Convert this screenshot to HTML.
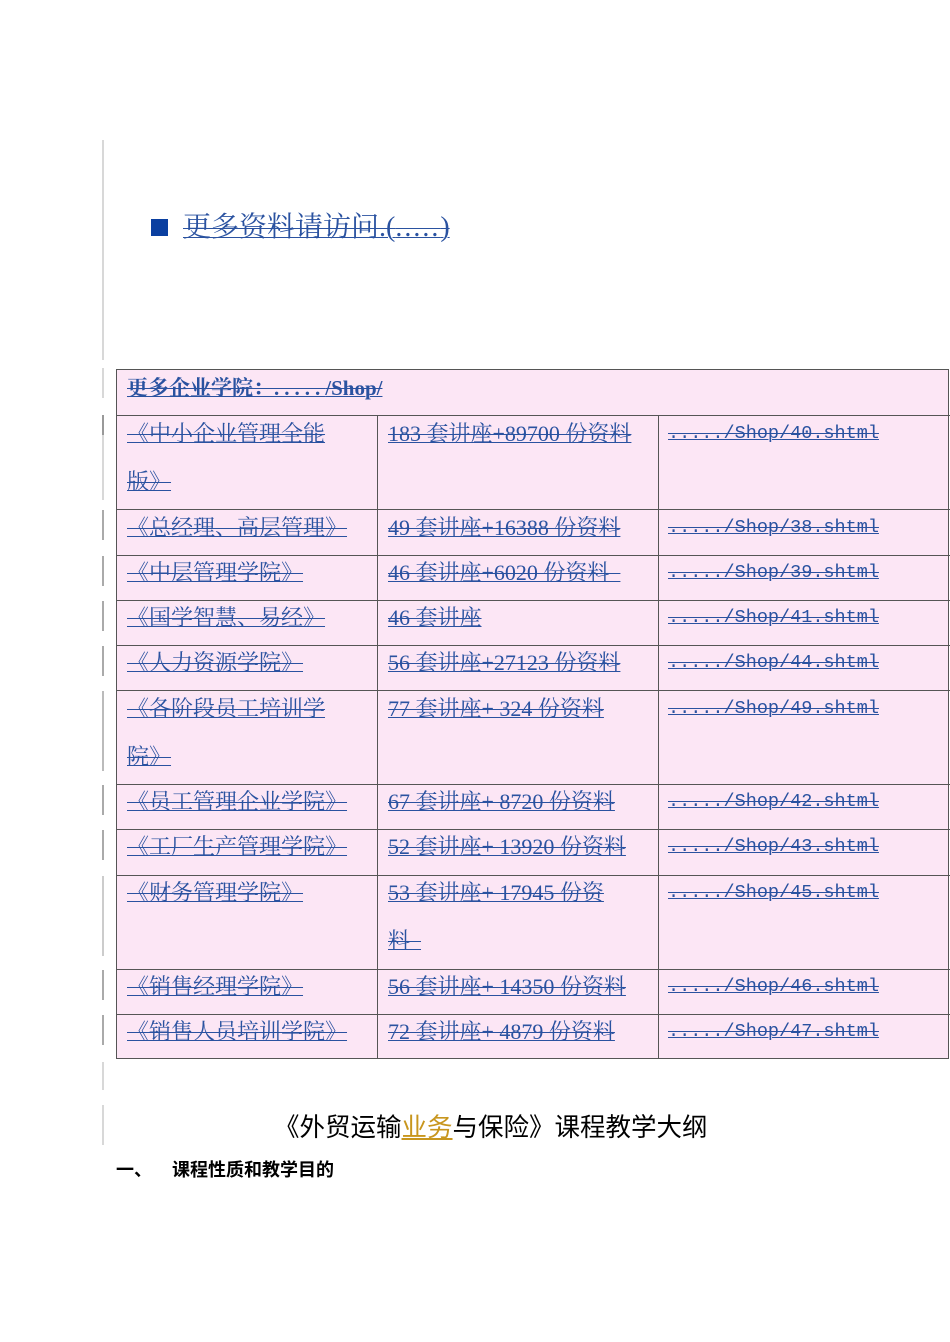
<!DOCTYPE html>
<html><head><meta charset="utf-8">
<style>
body{margin:0;width:950px;height:1342px;background:#fff;position:relative;overflow:hidden;font-family:"Liberation Serif","Noto Serif CJK SC",serif;}
.a{position:absolute;}
.lk{color:#2a52a0;text-decoration:underline line-through;text-decoration-thickness:1px;white-space:nowrap;}
.bar{position:absolute;left:102px;width:2px;background:#d8d8d8;}
.tb{position:absolute;left:116px;top:369px;width:833px;height:690px;background:#fce6f5;border:1px solid #555;box-sizing:border-box;}
.h{position:absolute;left:116px;width:834px;height:1px;background:#555;}
.v{position:absolute;width:1px;background:#555;}
.c{position:absolute;font-size:22px;line-height:48px;}
.m{font-family:"Liberation Mono",monospace;font-size:18.5px;}
</style></head><body>
<div class="bar" style="top:140px;height:220px"></div>
<div class="bar" style="top:368px;height:30px"></div>
<div class="bar" style="top:415px;height:20px;background:#999"></div>
<div class="bar" style="top:435px;height:65px"></div>
<div class="bar" style="top:510px;height:30px;background:#aaa"></div>
<div class="bar" style="top:556px;height:30px;background:#aaa"></div>
<div class="bar" style="top:601px;height:30px;background:#aaa"></div>
<div class="bar" style="top:646px;height:30px;background:#aaa"></div>
<div class="bar" style="top:691px;height:80px;background:#bbb"></div>
<div class="bar" style="top:785px;height:30px;background:#aaa"></div>
<div class="bar" style="top:830px;height:30px;background:#aaa"></div>
<div class="bar" style="top:876px;height:80px;background:#ccc"></div>
<div class="bar" style="top:970px;height:30px;background:#aaa"></div>
<div class="bar" style="top:1015px;height:30px;background:#aaa"></div>
<div class="bar" style="top:1062px;height:28px"></div>
<div class="bar" style="top:1105px;height:40px"></div>

<div class="a" style="left:151px;top:219px;width:17px;height:17px;background:#0a3fa0"></div>
<div class="a lk" style="left:183px;top:208px;font-size:28px;line-height:40px;">更多资料请访问.(<span style="letter-spacing:2px">.....</span>)</div>

<div class="tb"></div>
<div class="h" style="top:415px"></div>
<div class="h" style="top:509px"></div>
<div class="h" style="top:555px"></div>
<div class="h" style="top:600px"></div>
<div class="h" style="top:645px"></div>
<div class="h" style="top:690px"></div>
<div class="h" style="top:784px"></div>
<div class="h" style="top:829px"></div>
<div class="h" style="top:875px"></div>
<div class="h" style="top:969px"></div>
<div class="h" style="top:1014px"></div>
<div class="v" style="left:377px;top:415px;height:644px"></div>
<div class="v" style="left:658px;top:415px;height:644px"></div>

<div class="c lk" style="left:127px;top:364px;font-weight:bold;font-size:21px;">更多企业学院：<span style="letter-spacing:5px">.....</span>/Shop/</div>

<div class="c lk" style="left:127px;top:410px">《中小企业管理全能</div>
<div class="c lk" style="left:127px;top:458px">版》</div>
<div class="c lk" style="left:388px;top:410px">183 套讲座+89700 份资料</div>
<div class="c lk m" style="left:668px;top:410px">...../Shop/40.shtml</div>

<div class="c lk" style="left:127px;top:504px">《总经理、高层管理》</div>
<div class="c lk" style="left:388px;top:504px">49 套讲座+16388 份资料</div>
<div class="c lk m" style="left:668px;top:504px">...../Shop/38.shtml</div>

<div class="c lk" style="left:127px;top:549px">《中层管理学院》</div>
<div class="c lk" style="left:388px;top:549px">46 套讲座+6020 份资料 &nbsp;</div>
<div class="c lk m" style="left:668px;top:549px">...../Shop/39.shtml</div>

<div class="c lk" style="left:127px;top:594px">《国学智慧、易经》</div>
<div class="c lk" style="left:388px;top:594px">46 套讲座</div>
<div class="c lk m" style="left:668px;top:594px">...../Shop/41.shtml</div>

<div class="c lk" style="left:127px;top:639px">《人力资源学院》</div>
<div class="c lk" style="left:388px;top:639px">56 套讲座+27123 份资料</div>
<div class="c lk m" style="left:668px;top:639px">...../Shop/44.shtml</div>

<div class="c lk" style="left:127px;top:685px">《各阶段员工培训学</div>
<div class="c lk" style="left:127px;top:733px">院》</div>
<div class="c lk" style="left:388px;top:685px">77 套讲座+ 324 份资料</div>
<div class="c lk m" style="left:668px;top:685px">...../Shop/49.shtml</div>

<div class="c lk" style="left:127px;top:778px">《员工管理企业学院》</div>
<div class="c lk" style="left:388px;top:778px">67 套讲座+ 8720 份资料</div>
<div class="c lk m" style="left:668px;top:778px">...../Shop/42.shtml</div>

<div class="c lk" style="left:127px;top:823px">《工厂生产管理学院》</div>
<div class="c lk" style="left:388px;top:823px">52 套讲座+ 13920 份资料</div>
<div class="c lk m" style="left:668px;top:823px">...../Shop/43.shtml</div>

<div class="c lk" style="left:127px;top:869px">《财务管理学院》</div>
<div class="c lk" style="left:388px;top:869px">53 套讲座+ 17945 份资</div>
<div class="c lk" style="left:388px;top:917px">料 &nbsp;</div>
<div class="c lk m" style="left:668px;top:869px">...../Shop/45.shtml</div>

<div class="c lk" style="left:127px;top:963px">《销售经理学院》</div>
<div class="c lk" style="left:388px;top:963px">56 套讲座+ 14350 份资料</div>
<div class="c lk m" style="left:668px;top:963px">...../Shop/46.shtml</div>

<div class="c lk" style="left:127px;top:1008px">《销售人员培训学院》</div>
<div class="c lk" style="left:388px;top:1008px">72 套讲座+ 4879 份资料</div>
<div class="c lk m" style="left:668px;top:1008px">...../Shop/47.shtml</div>

<div class="a" style="left:274px;top:1110px;font-size:25.5px;line-height:36px;font-family:'Liberation Sans','Noto Sans CJK SC',sans-serif;color:#000;white-space:nowrap;">《外贸运输<span style="color:#c8961e;text-decoration:underline;">业务</span>与保险》课程教学大纲</div>
<div class="a" style="left:116px;top:1157px;font-size:18px;line-height:26px;font-family:'Liberation Sans','Noto Sans CJK SC',sans-serif;font-weight:bold;white-space:nowrap;">一、&nbsp;&nbsp;&nbsp;&nbsp;课程性质和教学目的</div>
</body></html>
